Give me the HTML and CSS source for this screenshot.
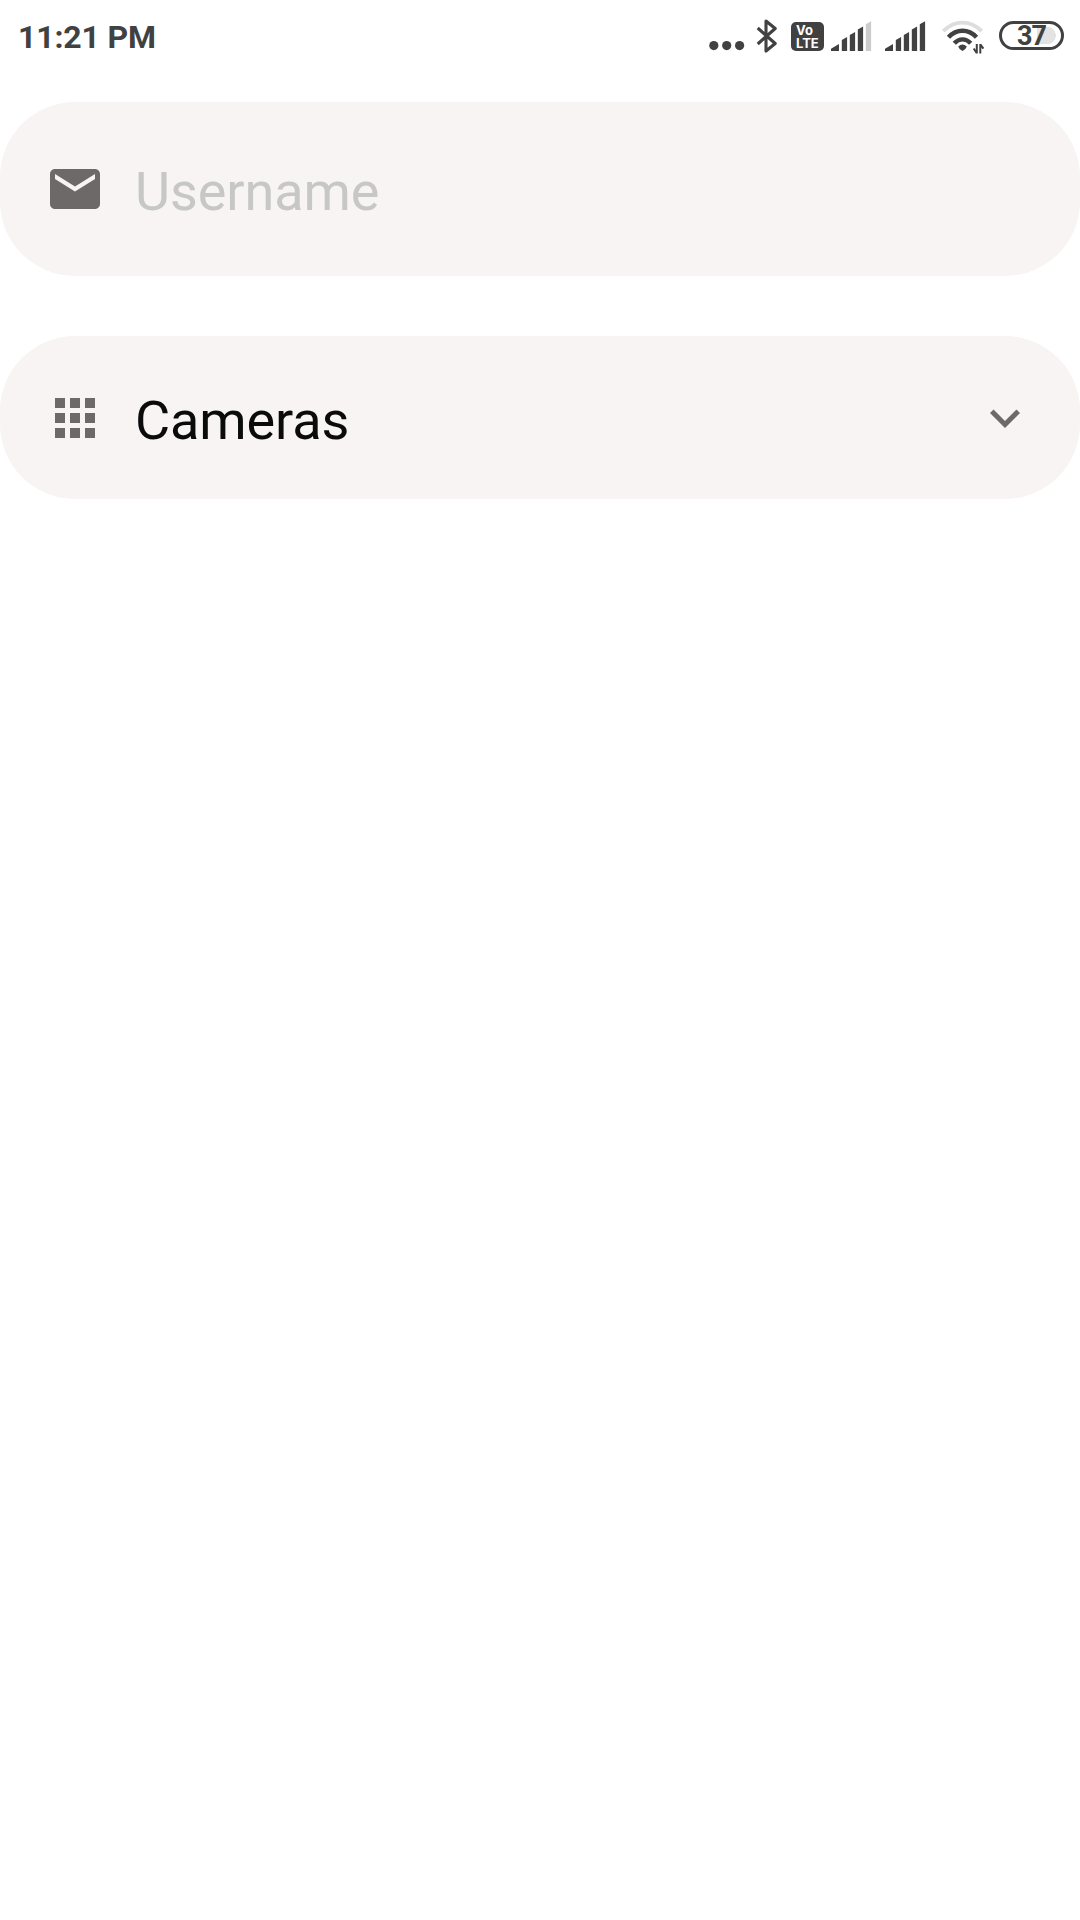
FILE: index.html
```
<!DOCTYPE html>
<html lang="en">
<head>
<meta charset="utf-8">
<title>Camera login</title>
<link rel="stylesheet" href="styles.css">
</head>
<body>
<header class="status-bar">
  <span class="time">11:21 PM</span>
  <div class="status-icons">
    <svg class="dots" width="37" height="12" viewBox="0 0 37 12"><circle cx="4.8" cy="5.6" r="4.6"/><circle cx="17.7" cy="5.6" r="4.6"/><circle cx="30.6" cy="5.6" r="4.6"/></svg>
    <svg class="bluetooth" width="24" height="36" viewBox="0 0 24 36"><path d="M2.7 10 20.2 25.5 11 33V3L20.2 10.5 2.7 26" fill="none" stroke="currentColor" stroke-width="3.1" stroke-linejoin="round"/></svg>
    <div class="volte"><span>Vo</span><span>LTE</span></div>
    <svg class="signal" width="41" height="30" viewBox="0 0 41 30"><path d="M0 30v-2.2L8 23v7zM10.8 30V19l5.3-3v14zM18.8 30V14l5.3-3v19zM26.8 30V8.6l5.3-3V30z"/><path class="faint" d="M34.8 30V3.2l5.3-3V30z"/></svg>
    <svg class="signal second" width="41" height="30" viewBox="0 0 41 30"><path d="M0 30v-2.2L8 23v7zM10.8 30V19l5.3-3v14zM18.8 30V14l5.3-3v19zM26.8 30V8.6l5.3-3V30zM34.8 30V3.2l5.3-3V30z"/></svg>
    <svg class="wifi" width="44" height="34" viewBox="0 0 44 34"><path class="faint-line" d="M2.3 11.2C13.5-.3 29.5-.3 40.7 11.2" stroke-width="3.8"/><path d="M7.5 17.2C15.5 8.5 27.5 8.5 35.5 17.2M13.3 23.3C18 18 25 18 29.7 23.3" stroke-width="4.4"/><path class="solid" d="M17.2 26.5Q21.5 22.3 25.8 26.5 25 29.5 21.5 31 18 29.5 17.2 26.5z"/><path d="M35.8 24v9.5M35.8 33.2 32.7 28.5M39.3 33.5V24M39.3 24.3 42.4 28.7" stroke-width="2"/></svg>
    <div class="battery"><span class="level">37</span></div>
  </div>
</header>
<main class="form">
  <label class="field username">
    <svg class="icon" viewBox="0 0 24 24"><path d="M20 4H4c-1.1 0-1.99.9-1.99 2L2 18c0 1.1.9 2 2 2h16c1.1 0 2-.9 2-2V6c0-1.1-.9-2-2-2zm0 4-8 5-8-5V6l8 5 8-5z"/></svg>
    <input class="input" type="text" placeholder="Username">
  </label>
  <div class="field select">
    <svg class="icon" viewBox="0 0 24 24"><path d="M4 8h4V4H4zm6 12h4v-4h-4zm-6 0h4v-4H4zm0-6h4v-4H4zm6 0h4v-4h-4zm6-10v4h4V4zm-6 4h4V4h-4zm6 6h4v-4h-4zm0 6h4v-4h-4z"/></svg>
    <span class="value">Cameras</span>
    <svg class="icon chevron" viewBox="0 0 24 24"><path d="M7.41 8.59 12 13.17l4.59-4.58L18 10l-6 6-6-6z"/></svg>
  </div>
</main>
</body>
</html>
```
FILE: styles.css
```
* { box-sizing: border-box; }
body {
  margin: 0;
  min-height: 1920px;
  background: #fff;
  font-family: Roboto, sans-serif;
}
svg { display: block; flex: none; fill: currentColor; }
.status-bar {
  height: 72px;
  padding: 0 16px 0 18px;
  display: flex;
  justify-content: space-between;
  align-items: center;
  color: #414141;
}
.time { font-size: 32px; font-weight: 700; line-height: 38px; letter-spacing: -0.15px; padding-top: 1px; white-space: nowrap; }
.status-icons { display: flex; align-items: center; }
.dots { margin-top: 19px; }
.bluetooth { margin-left: 9px; }
.volte {
  width: 33px;
  height: 29px;
  margin: 1px 0 0 12px;
  padding: 2px 0 0 5px;
  border-radius: 5px;
  background: #414141;
  color: #fff;
  font: 700 13px/13px Inter, sans-serif;
  display: flex;
  flex-direction: column;
}
.signal { margin-left: 7px; }
.second { margin-left: 13px; }
.faint { fill: #ccc; }
.wifi { margin: 2px 0 0 15px; fill: none; stroke: currentColor; }
.faint-line { stroke: #ddd; }
.solid { fill: currentColor; stroke: none; }
.battery {
  width: 65px;
  height: 29px;
  margin: -1px 0 0 14px;
  border: 3px solid #414141;
  border-radius: 15px;
  background: radial-gradient(circle at 45px 11.5px, #e3e3e3 8.5px, transparent 9px) content-box, linear-gradient(#e3e3e3, #e3e3e3) 35px 3px / 10px 17px no-repeat;
  display: flex;
  justify-content: center;
  align-items: center;
}
.level { font-size: 27px; line-height: 26px; font-weight: 700; letter-spacing: -1px; }
.form { padding-top: 30px; display: flex; flex-direction: column; gap: 60px; }
.field {
  display: flex;
  align-items: center;
  padding: 0 45px;
  border-radius: 75px;
  background: #f7f4f3;
  color: #6d6968;
}
.username { height: 174px; }
.select { height: 163px; }
.icon { width: 60px; height: 60px; }
.input, .value {
  flex: 1;
  min-width: 0;
  margin: 0 0 0 30px;
  padding: 6px 0 0;
  border: 0;
  outline: 0;
  background: none;
  font: 400 54px/64px Roboto, sans-serif;
  letter-spacing: -0.1px;
  color: #0b0b0b;
}
.input::placeholder { color: #c7c7c7; opacity: 1; }
```
